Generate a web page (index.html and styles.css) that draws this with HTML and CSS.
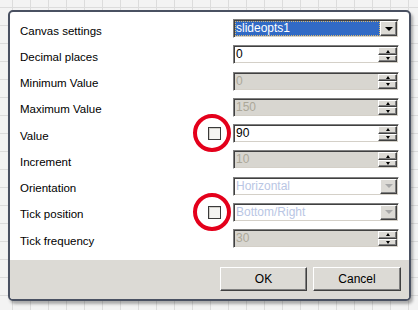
FILE: index.html
```html
<!DOCTYPE html>
<html lang="en">
<head>
  <meta charset="UTF-8">
  <title>Slider options</title>
  <link rel="stylesheet" href="styles.css">
</head>
<body>

  <div class="dialog">
    <div class="form">
      <span class="label">Canvas settings</span>
      <span class="check-cell"></span>
      <div class="field combo">
        <span class="text selected">slideopts1</span>
        <span class="drop"><i class="arrow-down"></i></span>
      </div>

      <span class="label">Decimal places</span>
      <span class="check-cell"></span>
      <div class="field">
        <span class="text">0</span>
        <span class="spin"><span class="spin-btn"><i class="tri-up"></i></span><span class="spin-btn"><i class="tri-down"></i></span></span>
      </div>

      <span class="label">Minimum Value</span>
      <span class="check-cell"></span>
      <div class="field disabled">
        <span class="text">0</span>
        <span class="spin"><span class="spin-btn"><i class="tri-up"></i></span><span class="spin-btn"><i class="tri-down"></i></span></span>
      </div>

      <span class="label">Maximum Value</span>
      <span class="check-cell"></span>
      <div class="field disabled">
        <span class="text">150</span>
        <span class="spin"><span class="spin-btn"><i class="tri-up"></i></span><span class="spin-btn"><i class="tri-down"></i></span></span>
      </div>

      <span class="label">Value</span>
      <span class="check-cell marked"><span class="checkbox"></span></span>
      <div class="field">
        <span class="text">90</span>
        <span class="spin"><span class="spin-btn"><i class="tri-up"></i></span><span class="spin-btn"><i class="tri-down"></i></span></span>
      </div>

      <span class="label">Increment</span>
      <span class="check-cell"></span>
      <div class="field disabled">
        <span class="text">10</span>
        <span class="spin"><span class="spin-btn"><i class="tri-up"></i></span><span class="spin-btn"><i class="tri-down"></i></span></span>
      </div>

      <span class="label">Orientation</span>
      <span class="check-cell"></span>
      <div class="field combo combo-off">
        <span class="text">Horizontal</span>
        <span class="drop"><i class="arrow-down"></i></span>
      </div>

      <span class="label">Tick position</span>
      <span class="check-cell marked"><span class="checkbox"></span></span>
      <div class="field combo combo-off">
        <span class="text">Bottom/Right</span>
        <span class="drop"><i class="arrow-down"></i></span>
      </div>

      <span class="label">Tick frequency</span>
      <span class="check-cell"></span>
      <div class="field disabled">
        <span class="text">30</span>
        <span class="spin"><span class="spin-btn"><i class="tri-up"></i></span><span class="spin-btn"><i class="tri-down"></i></span></span>
      </div>
    </div>

    <div class="footer">
      <button class="btn btn-ok">OK</button>
      <button class="btn btn-cancel">Cancel</button>
    </div>
  </div>

</body>
</html>
```

FILE: styles.css
```css
body {
  margin: 0;
  width: 418px;
  height: 310px;
  overflow: hidden;
  font-family: "Liberation Sans", Arial, sans-serif;
  font-size: 11px;
  background-color: #f3f3f3;
  background-image:
    linear-gradient(to right, #dcdcdc 1px, transparent 1px),
    linear-gradient(to bottom, #dcdcdc 1px, transparent 1px);
  background-size: 18px 18px;
  background-position: 12px 7px;
  padding: 10px 0 0 8px;
  box-sizing: border-box;
}

.dialog {
  width: 403px;
  height: 291px;
  box-sizing: border-box;
  border: 2px solid #4a5162;
  border-radius: 5px;
  background: #fff;
  box-shadow: 2px 3px 3px rgba(0, 0, 0, 0.3);
  display: flex;
  flex-direction: column;
  overflow: hidden;
}

.form {
  height: 248px;
  box-sizing: border-box;
  padding: 7px 10px 0 10px;
  display: grid;
  grid-template-columns: 1fr 26px 166px;
  grid-auto-rows: 19px;
  row-gap: 7.25px;
  align-items: center;
}

.label {
  color: #000;
  font-size: 11.5px;
  line-height: 19px;
  padding-top: 5px;
}

.check-cell {
  height: 19px;
  position: relative;
}

.checkbox {
  position: absolute;
  left: 1px;
  top: 3px;
  width: 13px;
  height: 13px;
  box-sizing: border-box;
  border: 1px solid #3a3a3a;
  background: #f4f4f2;
  box-shadow: inset 1px 1px #d0cec8;
}

/* red highlight ring drawn over the checkbox */
.marked::after {
  content: "";
  position: absolute;
  left: -14px;
  top: -10px;
  width: 30px;
  height: 30px;
  border: 4px solid #e4001b;
  border-radius: 50%;
}

.field {
  height: 19px;
  box-sizing: border-box;
  display: flex;
  align-items: stretch;
  background: #fff;
  border: 1px solid;
  border-color: #808080 #ffffff #ffffff #808080;
  box-shadow: inset 1px 1px #404040, inset -1px -1px #d4d0c8;
  padding: 1px;
}

.field .text {
  flex: 1;
  padding-left: 1px;
  line-height: 15px;
  font-size: 12px;
  color: #000;
  white-space: nowrap;
}

.field.disabled {
  background: #d8d6d0;
}

.field.disabled .text {
  color: #aca899;
}

.combo-off .text {
  color: #b9c6e4;
}

.selected {
  background: #316ac5;
  color: #fff !important;
  outline: 1px dotted #d8b870;
  outline-offset: -1px;
}

.spin {
  width: 19px;
  display: flex;
  flex-direction: column;
}

.spin-btn,
.drop {
  flex: 1;
  display: flex;
  align-items: center;
  justify-content: center;
  background: #dcdad5;
  border: 1px solid;
  border-color: #ffffff #404040 #404040 #ffffff;
  box-shadow: inset -1px -1px #808080;
}

.drop {
  flex: none;
  width: 17px;
  box-sizing: border-box;
}

.tri-up,
.tri-down {
  width: 0;
  height: 0;
  border-left: 2.5px solid transparent;
  border-right: 2.5px solid transparent;
}

.tri-up {
  border-bottom: 3px solid #000;
}

.tri-down {
  border-top: 3px solid #000;
}

.arrow-down {
  width: 0;
  height: 0;
  border-left: 4px solid transparent;
  border-right: 4px solid transparent;
  border-top: 4px solid #000;
}

.combo-off .arrow-down {
  border-top-color: #a8a8a8;
}

.footer {
  flex: 1;
  background: #dcdad5;
  display: flex;
  justify-content: flex-end;
  align-items: flex-start;
  gap: 6px;
  padding: 7px 8px 0 0;
}

.btn {
  height: 24px;
  box-sizing: border-box;
  background: #dcdad5;
  font-family: "Liberation Sans", Arial, sans-serif;
  font-size: 12px;
  color: #000;
  border: 1px solid;
  border-color: #ffffff #404040 #404040 #ffffff;
  box-shadow: inset -1px -1px #808080;
  padding: 0;
}

.btn-ok {
  width: 87px;
}

.btn-cancel {
  width: 88px;
}
```
